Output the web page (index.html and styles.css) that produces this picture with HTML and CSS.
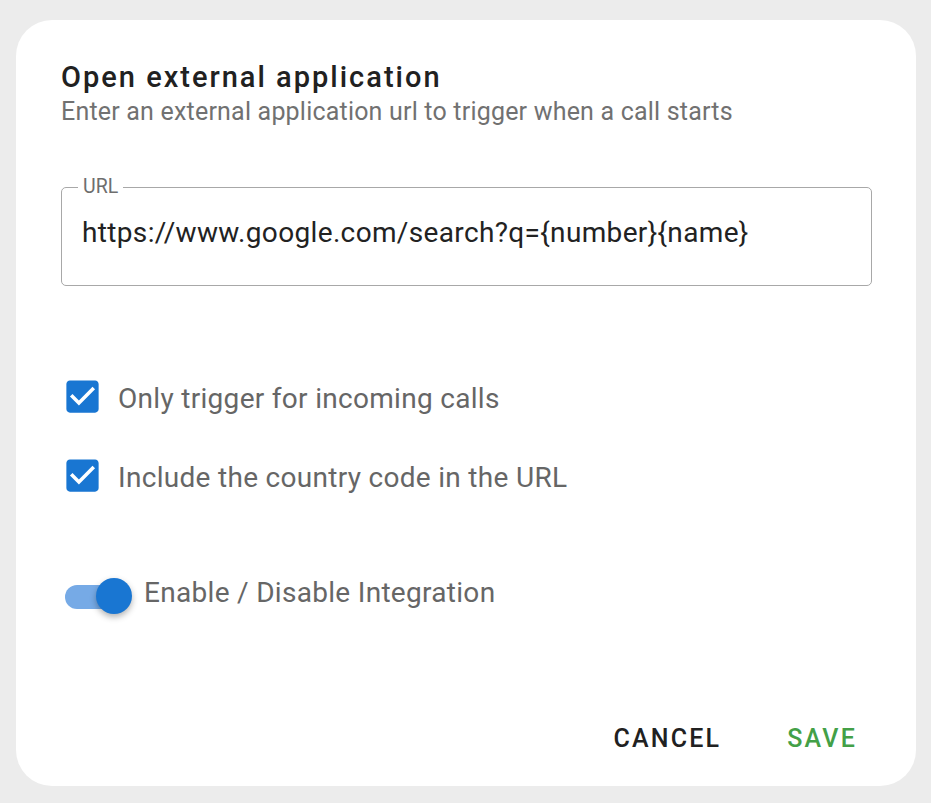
FILE: index.html
```html
<!DOCTYPE html>
<html>
<head>
<meta charset="utf-8">
<link rel="stylesheet" href="styles.css">
</head>
<body>
<div class="dialog">
  <div class="header">
    <h1 class="title">Open external application</h1>
    <p class="subtitle">Enter an external application url to trigger when a call starts</p>
  </div>
  <div class="field">
    <span class="label">URL</span>
    <div class="value">https://www.google.com/search?q={number}{name}</div>
  </div>
  <div class="checks">
    <label class="check">
      <svg class="cb" viewBox="0 0 24 24" width="43" height="43"><path fill="#1976d2" d="M19 3H5c-1.11 0-2 .9-2 2v14c0 1.1.89 2 2 2h14c1.11 0 2-.9 2-2V5c0-1.1-.89-2-2-2zm-9 14l-5-5 1.41-1.41L10 14.17l7.59-7.59L19 8l-9 9z"/></svg>
      <span class="check-text">Only trigger for incoming calls</span>
    </label>
    <label class="check">
      <svg class="cb" viewBox="0 0 24 24" width="43" height="43"><path fill="#1976d2" d="M19 3H5c-1.11 0-2 .9-2 2v14c0 1.1.89 2 2 2h14c1.11 0 2-.9 2-2V5c0-1.1-.89-2-2-2zm-9 14l-5-5 1.41-1.41L10 14.17l7.59-7.59L19 8l-9 9z"/></svg>
      <span class="check-text">Include the country code in the URL</span>
    </label>
  </div>
  <div class="toggle-row">
    <span class="switch"><span class="track"></span><span class="thumb"></span></span>
    <span class="toggle-text">Enable / Disable Integration</span>
  </div>
  <div class="actions">
    <button class="btn cancel">CANCEL</button>
    <button class="btn save">SAVE</button>
  </div>
</div>
</body>
</html>
```
FILE: styles.css
```css
html, body { margin: 0; padding: 0; }
body {
  background: #ececec;
  font-family: Roboto, "Liberation Sans", sans-serif;
  width: 931px;
  height: 803px;
  overflow: hidden;
}
.dialog {
  box-sizing: border-box;
  margin: 20px 0 0 16px;
  width: 900px;
  height: 766px;
  background: #fff;
  border-radius: 36px;
  padding: 0 44px 0 45px;
  display: flex;
  flex-direction: column;
}
.header { padding-top: 39px; }
.title {
  margin: 0;
  font-size: 29px;
  font-weight: 500;
  color: #212121;
  line-height: 36px;
  letter-spacing: 2px;
}
.subtitle {
  margin: 2px 0 0 0;
  font-size: 25px;
  color: #717171;
  line-height: 30px;
  letter-spacing: 0.2px;
}
.field {
  position: relative;
  margin-top: 60px;
  height: 99px;
  box-sizing: border-box;
  border: 1px solid #a8a8a8;
  border-radius: 5px;
  padding: 29px 0 0 20px;
}
.label {
  position: absolute;
  left: 16px;
  top: -12px;
  padding: 0 5px;
  background: #fff;
  font-size: 19.5px;
  color: #6e6e6e;
  line-height: 22px;
}
.value {
  font-size: 28px;
  color: #222;
  line-height: 32px;
  letter-spacing: 0.35px;
}
.checks {
  margin-top: 89px;
  display: flex;
  flex-direction: column;
  gap: 36px;
}
.check {
  display: flex;
  align-items: center;
  gap: 14px;
}
.cb { display: block; flex: none; }
.check-text, .toggle-text {
  font-size: 28px;
  color: #666;
  line-height: 32px;
  letter-spacing: 0.3px;
}
.check-text { padding-top: 4px; }
.toggle-text { padding-bottom: 5px; }
.toggle-row {
  margin-top: 80px;
  display: flex;
  align-items: center;
  gap: 12px;
  padding-left: 4px;
}
.switch {
  position: relative;
  width: 67px;
  height: 36px;
  display: block;
  flex: none;
}
.track {
  position: absolute;
  left: 0;
  top: 7px;
  width: 58px;
  height: 24px;
  border-radius: 12px;
  background: #76aae6;
}
.thumb {
  position: absolute;
  left: 31px;
  top: 0;
  width: 36px;
  height: 36px;
  border-radius: 50%;
  background: #1976d2;
  box-shadow: 0 3px 6px rgba(0,0,0,0.3);
}
.actions {
  margin-top: auto;
  margin-bottom: 31px;
  display: flex;
  justify-content: flex-end;
  gap: 66px;
  padding-right: 15px;
}
.btn {
  border: 0;
  background: none;
  padding: 0;
  font-family: inherit;
  font-size: 25px;
  font-weight: 500;
  letter-spacing: 2.2px;
  line-height: 32px;
}
.cancel { color: #212121; }
.save { color: #43a047; }
```
